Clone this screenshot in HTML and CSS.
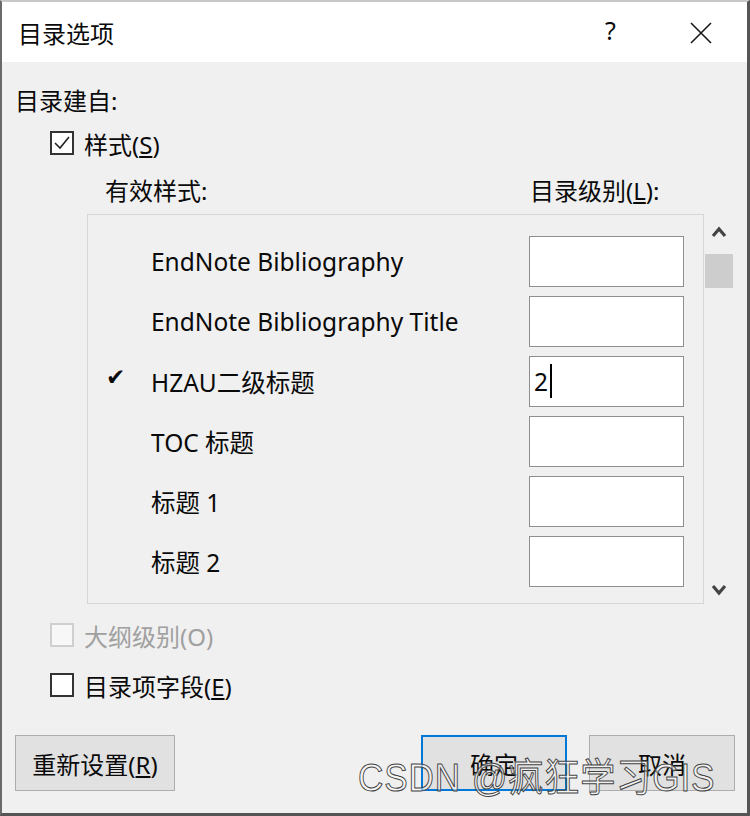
FILE: index.html
```html
<!DOCTYPE html>
<html lang="zh-CN">
<head>
    <meta charset="UTF-8">
    <meta name="viewport" content="width=device-width, initial-scale=1.0">
    <title>目录选项</title>
    <link rel="stylesheet" href="styles.css">
</head>
<body>
    <div class="dialog">
        <div class="titlebar">
            <span class="title">目录选项</span>
            <span class="help">?</span>
            <span class="close">
                <svg width="24" height="24" viewBox="0 0 24 24"><path d="M2 2 L22 22 M22 2 L2 22" stroke="#1a1a1a" stroke-width="1.6" fill="none"/></svg>
            </span>
        </div>

        <div class="content">
            <div class="row section-label">目录建自:</div>

            <div class="row check-row">
                <span class="box">
                    <svg width="20" height="20" viewBox="0 0 20 20"><path d="M3 10 L8 15 L17 4" stroke="#222" stroke-width="1.6" fill="none"/></svg>
                </span>
                <span>样式(<u>S</u>)</span>
            </div>

            <div class="row col-heads">
                <span class="head-style">有效样式:</span>
                <span class="head-level">目录级别(<u>L</u>):</span>
            </div>

            <div class="list-area">
                <div class="list">
                    <div class="item"><span class="mark"></span><span class="name">EndNote Bibliography</span><span class="level"></span></div>
                    <div class="item"><span class="mark"></span><span class="name">EndNote Bibliography Title</span><span class="level"></span></div>
                    <div class="item"><span class="mark">✔</span><span class="name">HZAU二级标题</span><span class="level">2<i class="caret"></i></span></div>
                    <div class="item"><span class="mark"></span><span class="name">TOC 标题</span><span class="level"></span></div>
                    <div class="item"><span class="mark"></span><span class="name">标题 1</span><span class="level"></span></div>
                    <div class="item"><span class="mark"></span><span class="name">标题 2</span><span class="level"></span></div>
                </div>
                <div class="scrollbar">
                    <svg class="arrow" width="16" height="12" viewBox="0 0 16 12"><path d="M2 10 L8 3 L14 10" stroke="#444" stroke-width="3.2" fill="none"/></svg>
                    <div class="thumb"></div>
                    <div class="track"></div>
                    <svg class="arrow" width="16" height="12" viewBox="0 0 16 12"><path d="M2 2 L8 9 L14 2" stroke="#444" stroke-width="3.2" fill="none"/></svg>
                </div>
            </div>

            <div class="row check-row disabled">
                <span class="box"></span>
                <span>大纲级别(O)</span>
            </div>

            <div class="row check-row entry">
                <span class="box"></span>
                <span>目录项字段(<u>E</u>)</span>
            </div>

            <div class="buttons">
                <button class="btn reset">重新设置(<u>R</u>)</button>
                <span class="spacer"></span>
                <button class="btn ok">确定</button>
                <button class="btn cancel">取消</button>
            </div>
        </div>

        <div class="watermark">CSDN @疯狂学习GIS</div>
    </div>
</body>
</html>
```

FILE: styles.css
```css
body {
    margin: 0;
    width: 750px;
    height: 816px;
    overflow: hidden;
    font-family: "Noto Sans", "Noto Sans CJK SC", sans-serif;
    color: #0a0a0a;
}

.dialog {
    position: relative;
    width: 750px;
    height: 816px;
    box-sizing: border-box;
    background-color: #f0f0f0;
    border-top: 2px solid #c8c8c8;
    border-left: 2px solid #6a6a6a;
    border-right: 3px solid #555;
    border-bottom: 3px solid #555;
}

.titlebar {
    height: 60px;
    background-color: #fff;
    display: flex;
    align-items: center;
    padding-left: 16px;
}

.title {
    font-size: 24px;
    flex: 1;
}

.help {
    font-size: 25px;
    width: 84px;
    margin-top: -4px;
}

.close {
    width: 58px;
    display: flex;
    padding-top: 2px;
}

.content {
    padding: 0 12px 0 13px;
}

.row {
    height: 38px;
    display: flex;
    align-items: center;
    font-size: 24px;
}

.section-label {
    margin-top: 18px;
}

.check-row {
    margin-top: 6px;
    padding-left: 35px;
}

.box {
    width: 20px;
    height: 20px;
    border: 2px solid #333;
    background-color: #fff;
    margin-right: 10px;
    display: flex;
}

.disabled {
    margin-top: 12px;
    color: #a0a0a0;
}

.disabled .box {
    border-color: #cfcfcf;
    background-color: #f7f7f7;
}

.entry {
    margin-top: 12px;
}

.col-heads {
    margin-top: 8px;
    padding-left: 90px;
}

.head-style {
    width: 425px;
}

.list-area {
    margin-top: 6px;
    display: flex;
    height: 390px;
}

.list {
    margin-left: 72px;
    width: 615px;
    border: 1px solid #d6d6d6;
    padding-top: 16px;
}

.item {
    height: 60px;
    display: flex;
    align-items: center;
    font-size: 24.5px;
}

.mark {
    width: 63px;
    padding-left: 18px;
    box-sizing: border-box;
    font-size: 23px;
    margin-top: -10px;
}

.name {
    width: 378px;
}

.level {
    background-color: #fff;
    border: 1px solid #8f8f8f;
    display: flex;
    align-items: center;
    padding-left: 4px;
    box-sizing: border-box;
    width: 155px;
    height: 51px;
}

.caret {
    width: 2px;
    height: 34px;
    background-color: #000;
    margin-left: 2px;
}

.scrollbar {
    width: 30px;
    display: flex;
    flex-direction: column;
    align-items: center;
    padding-top: 12px;
}

.thumb {
    width: 28px;
    height: 34px;
    background-color: #cdcdcd;
    margin-top: 8px;
}

.track {
    flex: 1;
}

.arrow {
    margin-bottom: 8px;
}

.buttons {
    display: flex;
    margin-top: 31px;
    height: 56px;
}

.spacer {
    flex: 1;
}

.btn {
    font-family: "Noto Sans", "Noto Sans CJK SC", sans-serif;
    font-size: 24px;
    color: #0a0a0a;
    background-color: #e1e1e1;
    border: 1px solid #adadad;
    padding: 0;
    height: 56px;
}

.reset {
    width: 160px;
}

.ok {
    width: 146px;
    border: 2px solid #0078d7;
    margin-right: 22px;
}

.cancel {
    width: 146px;
}

.watermark {
    position: absolute;
    left: 356px;
    top: 744px;
    white-space: nowrap;
    font-family: "Liberation Sans", "Noto Sans CJK SC", sans-serif;
    font-size: 39px;
    color: rgba(255, 255, 255, 0.55);
    -webkit-text-stroke: 1px #444;
    letter-spacing: 1px;
    transform: scaleX(0.9);
    transform-origin: left;
}
```
